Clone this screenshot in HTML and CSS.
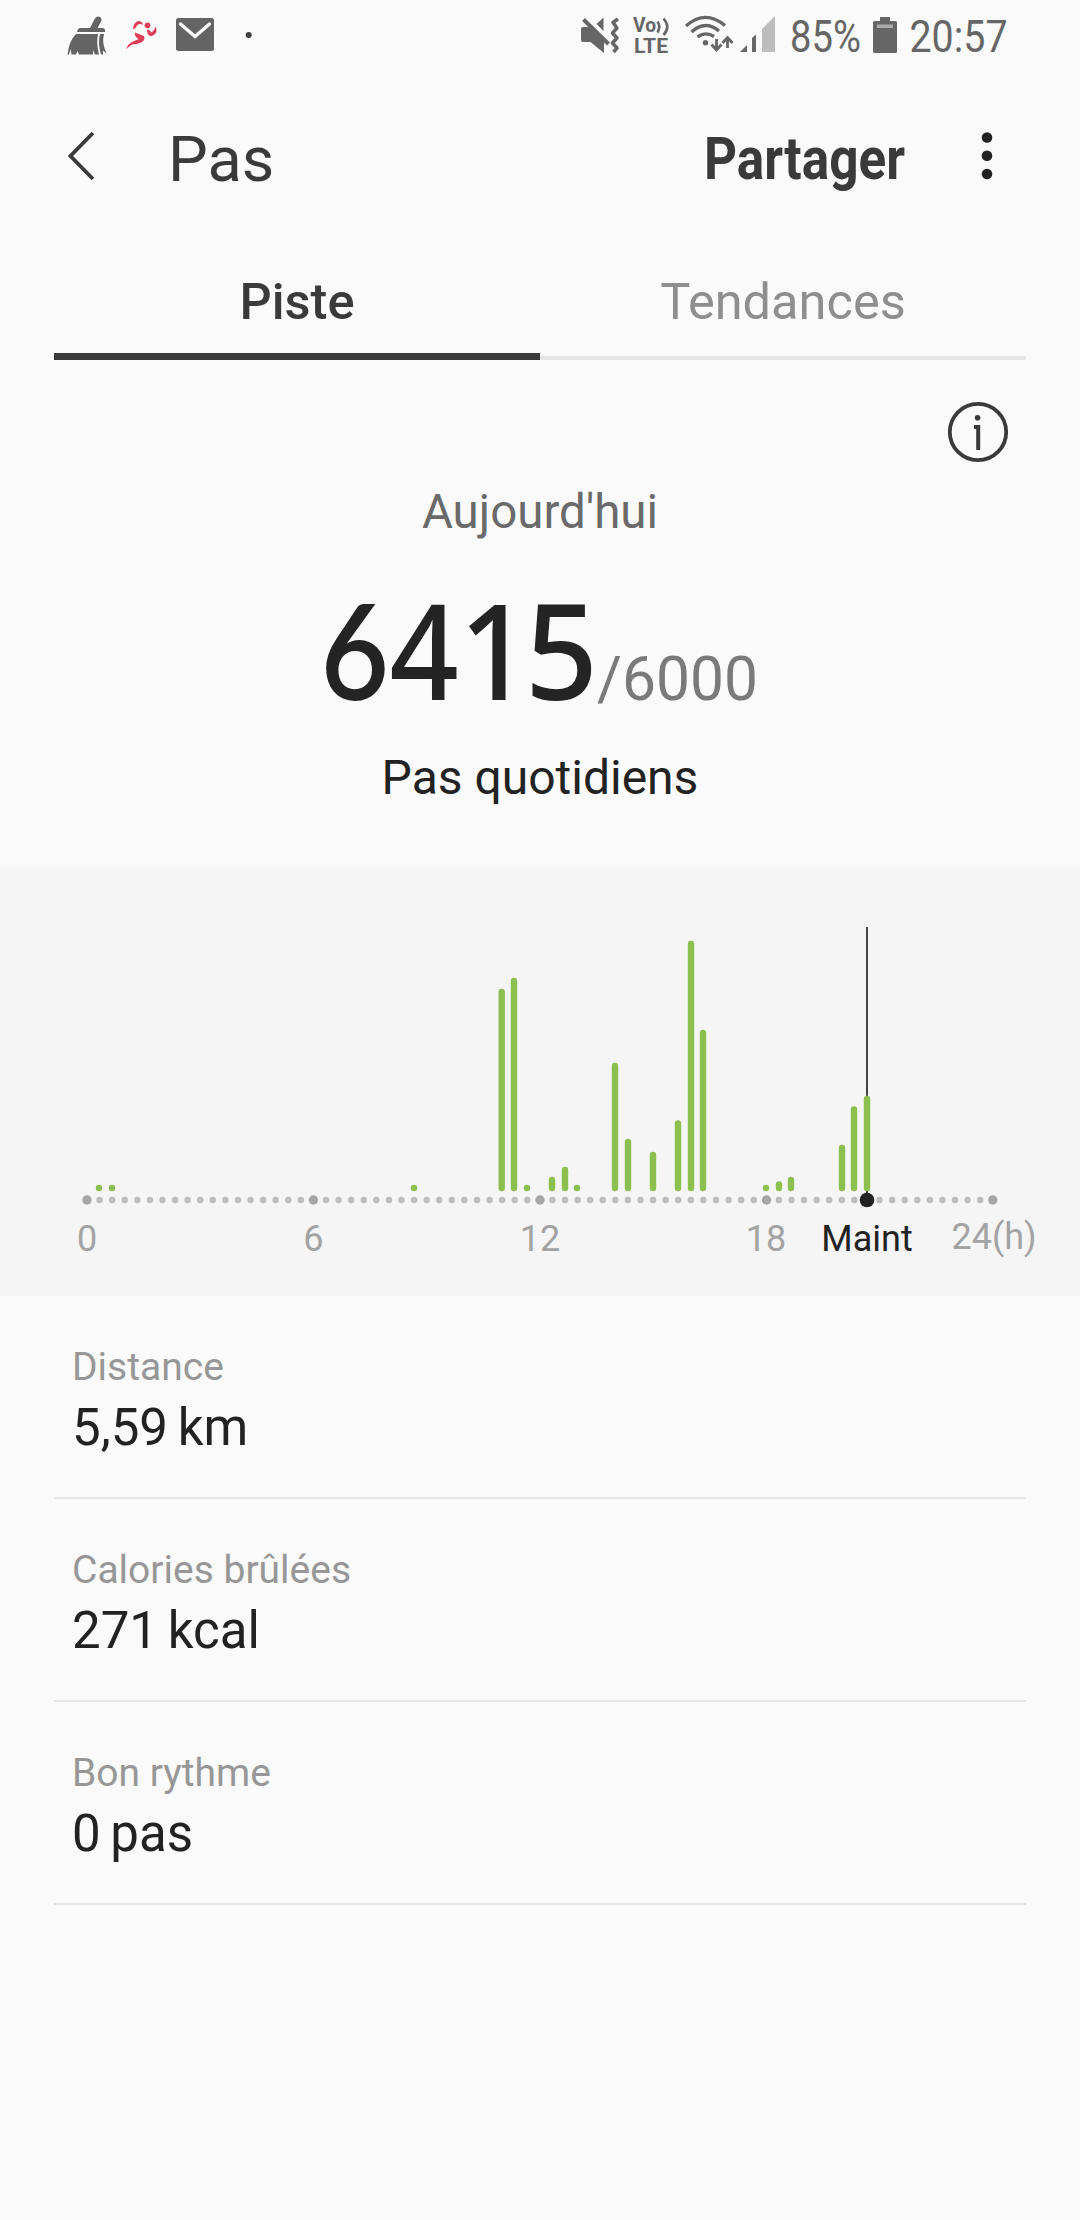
FILE: index.html
```
<!DOCTYPE html>
<html lang="fr">
  <head>
    <meta charset="utf-8">
    <title>Pas</title>
    <meta name="viewport" content="width=device-width, initial-scale=1">
    <link rel="stylesheet" href="styles.css">
  </head>
  <body>
    <div class="status-bar">
      <svg class="status-left" width="220" height="70" viewBox="50 0 220 70">
        <!-- cleaner -->
        <g fill="#646464">
          <path d="M90 28L95 18.500Q97 15.500 100 17Q102.500 19 101 21.500L97.500 28H103Q105.500 28.500 105 32H77Q77.500 28.500 80 28Z"/>
          <path d="M76 34H98Q96 42 99 54.500H95L93 50V54.500H79L77.500 51L76 54.500H71.500L70.500 49L69 54.500H67.500Q69 41 76 34Z"/>
          <path d="M100 34H104Q101.500 43 106.500 53.500L103 50.500V54.500H101Q97.500 44 100 34Z"/>
        </g>
        <!-- runner -->
        <g fill="#dd3d55">
          <circle cx="147.500" cy="25.300" r="2.900"/>
          <path d="M133 29.500Q133.500 21 139.500 21Q143 22 143 25Q139.500 23 137 25.500Q136 28.500 133 29.500Z"/>
          <path d="M147 29.500Q150 29.500 151 32.500Q154.500 31 155.500 26.500Q158.500 32 153 35.500Q147 37.500 147 29.500Z"/>
          <path d="M135 32.500L144 36Q145.500 39.500 142 42Q137 44.500 132 44.500L126 49Q127.500 44.500 131 42.500L138.500 39Q134 36 135 32.500Z"/>
        </g>
        <!-- mail -->
        <rect x="176" y="18" width="38" height="33" rx="2.500" fill="#646464"/>
        <path d="M180.500 24L195 36.500L209.500 24" fill="none" stroke="#fafafa" stroke-width="3.400" stroke-linecap="round"/>
        <circle cx="248.700" cy="35" r="3" fill="#404040"/>
      </svg>
      <svg class="status-right" width="440" height="70" viewBox="570 0 440 70">
        <g fill="#666">
          <!-- muted -->
          <path d="M583 27H588.500L604 39V53L590.500 42H583Q581 42 581 40V29Q581 27 583 27Z"/>
          <path d="M603.500 17.500V31L596.500 24Z"/>
          <path d="M583.500 19.500L608.500 44" fill="none" stroke="#666" stroke-width="4"/>
          <path d="M586.500 17L606 36" fill="none" stroke="#fafafa" stroke-width="2.500"/>
          <path d="M618 19L613 22.500L617 28L612.500 33L617 38L612.500 43L617 48L613.500 52" fill="none" stroke="#666" stroke-width="3.500" stroke-linejoin="round"/>
          <!-- VoLTE -->
          <text class="volte" x="633" y="32.300" textLength="23" lengthAdjust="spacingAndGlyphs">Vo</text>
          <text class="volte" x="634" y="52.500" textLength="34" lengthAdjust="spacingAndGlyphs">LTE</text>
          <path d="M657.500 21.500Q661 27 657.500 32.500M663.500 18.500Q671 27 663.500 35" fill="none" stroke="#666" stroke-width="2.600"/>
          <!-- wifi -->
          <g fill="none" stroke="#666" stroke-width="3.300">
            <path d="M686 26Q705 9 725 25.500"/>
            <path d="M691.500 32Q705 19.500 719 31"/>
            <path d="M697.500 37Q705.500 31 714 36.500"/>
            <path d="M716.500 39V50M711.500 44.500L716.500 50L721.500 44.500M727.500 48V37M722.500 43L727.500 37.500L732.500 43" stroke-width="2.800"/>
          </g>
          <circle cx="705.500" cy="42.700" r="2.700"/>
          <!-- signal -->
          <path d="M740 52L747 45V52Z"/>
          <path d="M752 38L756 34.500V52H752Z"/>
          <path d="M762 29L775 16V52H762Z" fill="#bdbdbd"/>
          <text class="status-text" x="790" y="52.300" textLength="71" lengthAdjust="spacingAndGlyphs">85%</text>
          <!-- battery -->
          <path d="M880 17H890V21H895.500Q897 21 897 22.500V51.500Q897 53 895.500 53H874.500Q873 53 873 51.500V22.500Q873 21 874.500 21H880Z"/>
          <rect x="877" y="24.500" width="16" height="3.500" fill="#aaa"/>
          <text class="status-text" x="909.500" y="52.300" textLength="98" lengthAdjust="spacingAndGlyphs">20:57</text>
        </g>
      </svg>
    </div>

    <div class="app-bar">
      <svg class="back" width="28" height="52" viewBox="0 0 28 52">
        <path d="M25 3L2.500 26L25 49" fill="none" stroke="#3a3a3a" stroke-width="3.800"/>
      </svg>
      <h1 class="title">Pas</h1>
      <svg class="share" width="204" height="70" viewBox="0 0 204 70">
        <text x="0" y="54.500" textLength="201" lengthAdjust="spacingAndGlyphs">Partager</text>
      </svg>
      <svg class="more" width="12" height="50" viewBox="0 0 12 50">
        <circle cx="6" cy="6.500" r="5.300"/>
        <circle cx="6" cy="24.700" r="5.300"/>
        <circle cx="6" cy="43" r="5.300"/>
      </svg>
    </div>

    <div class="tabs">
      <div class="tab active">Piste</div>
      <div class="tab">Tendances</div>
    </div>

    <div class="summary">
      <svg class="info" width="62" height="62" viewBox="0 0 62 62">
        <circle cx="31" cy="31" r="28.200" fill="none" stroke="#3a3a3a" stroke-width="3.800"/>
        <circle cx="30.600" cy="16.700" r="2.800" fill="#3a3a3a"/>
        <path d="M27 26H31.200V49" fill="none" stroke="#3a3a3a" stroke-width="4"/>
      </svg>
      <div class="day">Aujourd'hui</div>
      <svg class="steps" width="440" height="206" viewBox="320 542 440 206">
        <g class="count">
          <text class="six" transform="translate(320.500 700) scale(.89 1)">6</text>
          <text transform="translate(389.500 700) scale(.91 1)">4</text>
          <text transform="translate(459 700) scale(.94 1)">1</text>
          <text transform="translate(525 700) scale(.96 1)">5</text>
        </g>
        <text class="goal" x="597" y="700">/6000</text>
      </svg>
      <div class="caption">Pas quotidiens</div>
    </div>

    <div class="chart">
      <svg width="1080" height="430" viewBox="0 866 1080 430">
        <path class="now-line" d="M867 927V1200"/>
        <path class="dots" d="M87 1200H993"/>
        <g class="hours">
          <circle cx="87" cy="1200" r="4.700"/>
          <circle cx="313.400" cy="1200" r="4.700"/>
          <circle cx="540" cy="1200" r="4.700"/>
          <circle cx="766.500" cy="1200" r="4.700"/>
          <circle cx="992.800" cy="1200" r="4.700"/>
        </g>
        <g class="bars">
          <path d="M99 1188h0M112 1188h0M414 1188h0"/>
          <path d="M501.700 992V1188M514 981V1188M527 1188h0"/>
          <path d="M552 1180V1188M565 1170V1188M577 1188h0"/>
          <path d="M615 1066V1188M628 1142V1188M653 1155V1188"/>
          <path d="M678 1123.500V1188M691 944V1188M703 1033V1188"/>
          <path d="M766 1188h0M779 1184.500V1188M791 1180V1188"/>
          <path d="M842 1148V1188M854 1109.500V1188M867 1099V1188"/>
        </g>
        <circle cx="867" cy="1200" r="7.300" fill="#222"/>
        <g class="labels">
          <text x="87" y="1251.300">0</text>
          <text x="313.300" y="1251.300">6</text>
          <text x="540" y="1251.300">12</text>
          <text x="766" y="1251.300">18</text>
          <text class="now" x="867" y="1251">Maint</text>
          <text x="994" y="1249">24(h)</text>
        </g>
      </svg>
    </div>

    <div class="details">
      <div class="row">
        <div class="label">Distance</div>
        <div class="value">5,59 km</div>
      </div>
      <div class="row">
        <div class="label">Calories brûlées</div>
        <div class="value">271 kcal</div>
      </div>
      <div class="row">
        <div class="label">Bon rythme</div>
        <div class="value">0 pas</div>
      </div>
    </div>
  </body>
</html>
```
FILE: styles.css
```
* {
  box-sizing: border-box;
}

body {
  margin: 0;
  width: 1080px;
  min-height: 2220px;
  background: #fafafa;
  font-family: Roboto, sans-serif;
  color: #222;
}

svg {
  display: block;
  overflow: visible;
}

.status-bar {
  display: flex;
  justify-content: space-between;
  height: 70px;
  padding: 0 70px 0 50px;
}

.status-text {
  font-size: 45px;
}

.volte {
  font-size: 20px;
  font-weight: 700;
}

.app-bar {
  display: flex;
  align-items: center;
  height: 178px;
  padding: 0 87px 0 68px;
}

.back {
  margin-top: -6px;
}

.title {
  margin: 0 auto 0 72px;
  font-size: 63px;
  font-weight: 400;
  color: #3a3a3a;
}

.share {
  font-size: 60px;
  font-weight: 700;
  fill: #3a3a3a;
}

.more {
  margin: -6px 0 0 73px;
  fill: #222;
}

.tabs {
  display: flex;
  height: 112px;
  margin: 0 54px;
}

.tab {
  flex: 1;
  line-height: 108px;
  font-size: 50.5px;
  text-align: center;
  color: #8e8e8e;
  box-shadow: inset 0 -4px #e5e5e5;
}

.tab.active {
  font-weight: 500;
  color: #3a3a3a;
  box-shadow: inset 0 -7px #3a3a3a;
}

.summary {
  display: flex;
  flex-direction: column;
  align-items: center;
  height: 506px;
  padding-top: 41px;
}

.info {
  align-self: flex-end;
  margin-right: 71px;
}

.day {
  margin-top: 19px;
  line-height: 60px;
  font-size: 47.5px;
  color: #6a6a6a;
}

.count {
  font-family: "Noto Sans", sans-serif;
  font-size: 133px;
  font-weight: 500;
  fill: #242424;
}

.six {
  font-family: Lato, sans-serif;
  font-weight: 600;
}

.goal {
  font-size: 60.5px;
  fill: #7a7a7a;
}

.caption {
  line-height: 60px;
  font-size: 48px;
}

.chart {
  height: 430px;
  background: #f5f5f5;
}

.dots {
  stroke: #bdbdbd;
  stroke-width: 6.4;
  stroke-linecap: round;
  stroke-dasharray: 0 12.58;
}

.hours {
  fill: #a6a6a6;
}

.bars {
  fill: none;
  stroke: #8bc04f;
  stroke-width: 6.4;
  stroke-linecap: round;
}

.now-line {
  stroke: #444;
  stroke-width: 2;
}

.labels {
  font-size: 36px;
  text-anchor: middle;
  fill: #a3a3a3;
}

.labels .now {
  fill: #222;
}

.details {
  margin: 0 54px;
}

.row {
  height: 203px;
  padding: 43px 18px 0;
  border-bottom: 2px solid #e6e6e6;
}

.label {
  line-height: 56px;
  font-size: 39px;
  color: #979797;
}

.value {
  line-height: 66px;
  font-size: 51px;
  word-spacing: -3px;
}
```
